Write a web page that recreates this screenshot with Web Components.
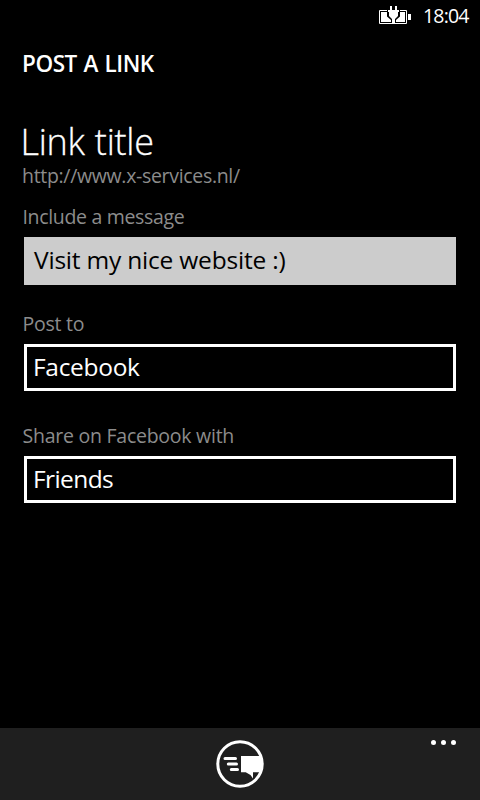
<!DOCTYPE html>
<html lang="en">
<head>
<meta charset="utf-8">
<title>Post a link</title>
<style>
html,body{margin:0;background:#000}
</style>
</head>
<body>
<post-link-page></post-link-page>
<script>
const define = (name, html) => customElements.define(name, class extends HTMLElement {
  constructor() {
    super();
    const t = document.createElement('template');
    t.innerHTML = html;
    this.attachShadow({ mode: 'open' }).appendChild(t.content.cloneNode(true));
  }
});

define('battery-icon', `<style>:host{display:block;width:32px;height:19px}svg{display:block}</style>
<svg width="32" height="19" viewBox="0 0 32 19">
  <path fill="none" stroke="#fff" d="M.5 4.500H27.500V17.500H.5Z"/>
  <path fill="#fff" d="M2 6H26V16H2ZM29 8h3v6h-3z"/>
  <path fill="#000" d="M8 3H21V10.500L17 14V17H16V19H13V17H12V14L8 10.500Z"/>
  <path fill="#fff" d="M11 0H13V4H16V0H18V4H20V6H19V10L16 13V18H13V13L10 10V6H9V4H11Z"/>
</svg>`);

define('status-bar', `<style>
:host{display:flex;justify-content:flex-end;box-sizing:border-box;height:32px;padding:0 12px 0 0;font-size:19.5px;line-height:31px}
battery-icon{margin:6px 12px 0 0}
.clock{letter-spacing:-.8px;width:45px}
</style><battery-icon></battery-icon><span class="clock"><slot></slot></span>`);

define('page-header', `<style>
:host{display:block;margin-top:16px;padding-left:22px;font-weight:600;font-size:22.5px;line-height:32px;letter-spacing:-.45px;word-spacing:1.2px}
</style><slot></slot>`);

define('link-summary', `<style>
:host{display:block;margin-top:40px;padding-left:22px}
.t{font-weight:300;font-size:36px;line-height:44px;margin-left:-1.5px;letter-spacing:-.25px;word-spacing:1px;-webkit-text-stroke:.3px #fff}
.u{font-size:19.5px;line-height:24px;color:#8c8c8c;letter-spacing:-.32px}
</style><div class="t"><slot name="title"></slot></div><div class="u"><slot name="url"></slot></div>`);

define('form-field', `<style>
:host{display:block;padding:0 24px}
.label{font-size:19.5px;line-height:24px;color:#8c8c8c;margin:0 0 8px -1.5px;letter-spacing:var(--label-track,-.25px)}
.box{box-sizing:border-box;height:47px;border:3px solid #fff;padding-left:6px;font-size:24.5px;line-height:40px;letter-spacing:var(--track,-.3px)}
:host([filled]) .box{height:48px;border:0;padding-left:10px;line-height:46px;background:#ccc;color:#000}
</style><div class="label"><slot name="label"></slot></div><div class="box"><slot></slot></div>`);

define('send-icon', `<style>:host{display:block;width:48px;height:48px}svg{display:block}</style>
<svg width="48" height="48" viewBox="0 0 48 48">
  <circle cx="24" cy="24" r="22.2" fill="none" stroke="#fff" stroke-width="3"/>
  <path fill="none" stroke="#fff" stroke-width="3" stroke-linecap="round" d="M9 18.500H19.500M12.300 24H20.500M15.300 29.500H21.500"/>
  <path fill="#fff" d="M25 16H45V32.300H37V38.500L34.500 35L29.700 32.300H25Z"/>
</svg>`);

define('app-bar', `<style>
:host{display:grid;grid-template-columns:1fr 48px 1fr;height:72px;margin-top:auto;background:#1f1f1f}
send-icon{margin-top:12px}
.more{justify-self:end;display:flex;gap:5px;margin:12px 24px 0 0;height:5px}
.more i{width:5px;height:5px;border-radius:50%;background:#fff}
</style><span></span><send-icon></send-icon><div class="more"><i></i><i></i><i></i></div>`);

define('post-link-page', `<style>
:host{display:flex;flex-direction:column;width:480px;height:800px;background:#000;color:#fff;font-family:"Open Sans","Noto Sans",sans-serif;white-space:nowrap;overflow:hidden}
.message{margin-top:17px;--track:-.2px;--label-track:-.33px}
.target{margin-top:27px}
.share{margin-top:33px;--track:-.6px}
</style>
<status-bar>18:04</status-bar>
<page-header>POST A LINK</page-header>
<link-summary><span slot="title">Link title</span><span slot="url">http://www.x-services.nl/</span></link-summary>
<form-field class="message" filled><span slot="label">Include a message</span>Visit my nice website :)</form-field>
<form-field class="target"><span slot="label">Post to</span>Facebook</form-field>
<form-field class="share"><span slot="label">Share on Facebook with</span>Friends</form-field>
<app-bar></app-bar>`);
</script>
</body>
</html>
